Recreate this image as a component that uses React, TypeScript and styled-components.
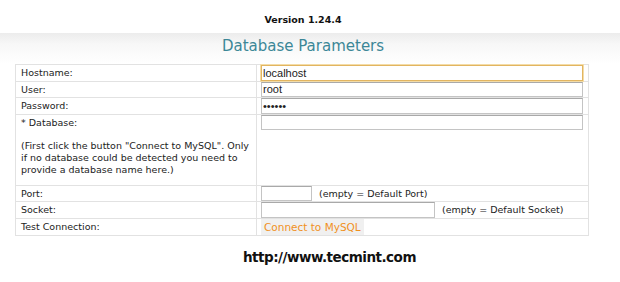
import React from "react";
import styled, { createGlobalStyle } from "styled-components";

const GlobalStyle = createGlobalStyle`
  html, body {
    margin: 0;
    padding: 0;
    background: #ffffff;
    font-family: "DejaVu Sans", Verdana, sans-serif;
  }
`;

const Page = styled.div`
  width: 620px;
  height: 282px;
  overflow: hidden;
  background: #fff;
`;

const Version = styled.div`
  height: 33px;
  display: flex;
  align-items: center;
  justify-content: center;
  padding-right: 14px;
  box-sizing: border-box;
  padding-top: 5px;
  font-size: 9.5px;
  font-weight: bold;
  color: #111;
`;

const Band = styled.div`
  height: 31px;
  background: linear-gradient(to bottom, #ececec 0%, #f7f7f7 35%, #ffffff 100%);
  display: flex;
  justify-content: center;
  align-items: center;
  padding-bottom: 5px;
  box-sizing: border-box;
`;

const Title = styled.h2`
  margin: 0;
  font-weight: normal;
  font-size: 15px;
  color: #3c8797;
  transform: translateX(-7px);
`;

const Params = styled.table`
  margin-left: 15px;
  width: 574px;
  border-collapse: collapse;
  font-size: 9.5px;
  color: #222;
`;

const Row = styled.tr<{ $tall?: boolean }>`
  height: ${(p) => (p.$tall ? "71px" : "16.5px")};
`;

const Label = styled.td`
  width: 235px;
  border: 1px solid #e2e2e2;
  padding: 1px 0 0 5px;
  vertical-align: top;
  line-height: 13px;
`;

const Note = styled.p`
  margin: 11px 0 0;
  line-height: 12px;
`;

const Field = styled.td`
  border: 1px solid #e2e2e2;
  padding: 0 0 0 4px;
  vertical-align: top;
  white-space: nowrap;
  line-height: 0;
`;

const Input = styled.input<{ $w: number; $focus?: boolean }>`
  box-sizing: border-box;
  width: ${(p) => p.$w}px;
  height: 15.5px;
  margin: 0;
  padding: 0 1px;
  vertical-align: top;
  font-family: "Liberation Sans", Arial, sans-serif;
  font-size: 11px;
  color: #222;
  background-color: #ffffff;
  border: 1px solid ${(p) => (p.$focus ? "#e2b560" : "#c4c4c4")};
  border-top-color: ${(p) => (p.$focus ? "#e2b560" : "#a9a9a9")};
  box-shadow: ${(p) => (p.$focus ? "0 0 0 1px #f3dca8" : "none")};
  outline: none;
`;

const Hint = styled.span`
  display: inline-block;
  margin-left: 7px;
  line-height: 15px;
`;

const Button = styled.button`
  height: 16px;
  margin: 0;
  padding: 0 3px;
  border: none;
  background: #f0f0f0;
  font-family: "DejaVu Sans", Verdana, sans-serif;
  font-size: 10.5px;
  color: #f0901e;
  line-height: 16px;
  vertical-align: top;
`;

const Watermark = styled.div`
  margin-top: 13px;
  padding-left: 243px;
  font-family: "DejaVu Sans", sans-serif;
  font-weight: bold;
  font-size: 13.5px;
  color: #111;
  letter-spacing: -0.5px;
`;

export default function App() {
  return (
    <Page>
      <GlobalStyle />
      <Version>Version 1.24.4</Version>
      <Band>
        <Title>Database Parameters</Title>
      </Band>
      <Params>
        <tbody>
          <Row>
            <Label>Hostname:</Label>
            <Field>
              <Input $w={322} $focus defaultValue="localhost" />
            </Field>
          </Row>
          <Row>
            <Label>User:</Label>
            <Field>
              <Input $w={322} defaultValue="root" />
            </Field>
          </Row>
          <Row>
            <Label>Password:</Label>
            <Field>
              <Input $w={322} type="password" defaultValue="secret" />
            </Field>
          </Row>
          <Row $tall>
            <Label>
              * Database:
              <Note>
                (First click the button "Connect to MySQL". Only if no database could be
                detected you need to provide a database name here.)
              </Note>
            </Label>
            <Field>
              <Input $w={322} />
            </Field>
          </Row>
          <Row>
            <Label>Port:</Label>
            <Field>
              <Input $w={51} />
              <Hint>(empty = Default Port)</Hint>
            </Field>
          </Row>
          <Row>
            <Label>Socket:</Label>
            <Field>
              <Input $w={174} />
              <Hint>(empty = Default Socket)</Hint>
            </Field>
          </Row>
          <Row>
            <Label>Test Connection:</Label>
            <Field>
              <Button>Connect to MySQL</Button>
            </Field>
          </Row>
        </tbody>
      </Params>
      <Watermark>http://www.tecmint.com</Watermark>
    </Page>
  );
}
